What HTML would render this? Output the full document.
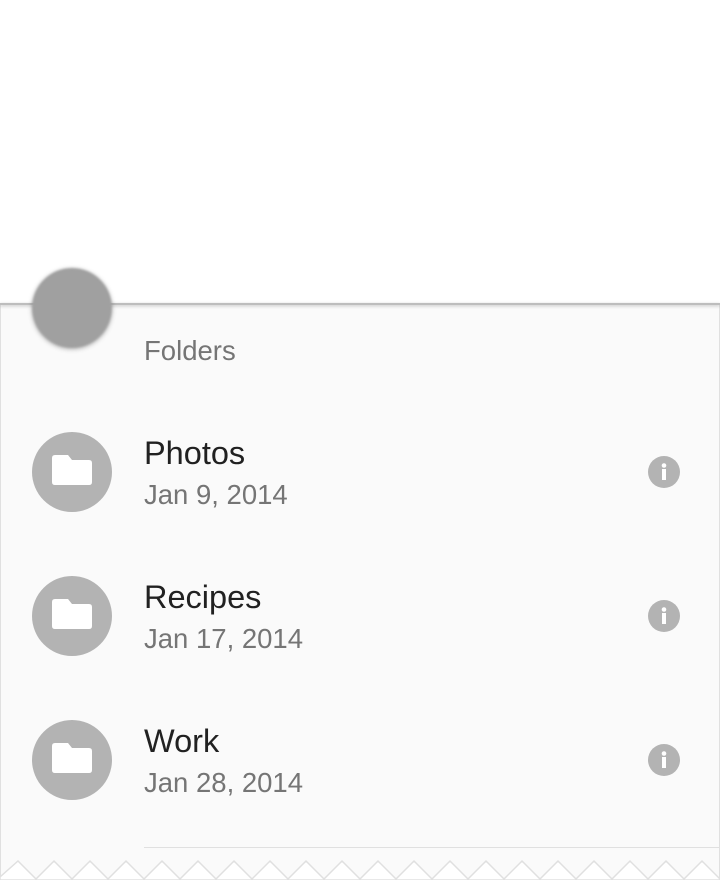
<!DOCTYPE html>
<html><head><style>
html,body{margin:0;padding:0;width:720px;height:880px;background:#fff;overflow:hidden;font-family:"Liberation Sans",sans-serif;position:relative}
.sheet{position:absolute;left:0;top:304px;width:720px;height:576px;background:#fafafa;border-left:1px solid #e0e0e0;border-right:1px solid #e0e0e0;box-sizing:border-box}
.topline{position:absolute;left:0;top:303px;width:720px;height:2px;background:#bdbdbd;box-shadow:0 1px 3px rgba(0,0,0,.25)}
.fab{position:absolute;left:32px;top:268px;width:80px;height:80px;border-radius:50%;background:#a0a0a0;filter:blur(1px);box-shadow:0 1px 4px rgba(0,0,0,.3)}
.hdr{position:absolute;left:144px;top:335px;font-size:27.5px;color:#757575}
.av{position:absolute;left:32px;width:80px;height:80px;border-radius:50%;background:#b3b3b3}
.av svg{position:absolute;left:20px;top:15px}
.t{position:absolute;left:144px;font-size:32.5px;color:#212121}
.d{position:absolute;left:144px;font-size:27.5px;color:#757575}
.info{position:absolute;left:648px;width:32px;height:32px}
.div{position:absolute;left:144px;top:847px;width:576px;height:1px;background:#e0e0e0}
</style></head><body>
<div class="sheet"></div>
<div class="topline"></div>
<div class="fab"></div>
<div class="hdr">Folders</div>

<div class="av" style="top:432px"><svg width="40" height="40" viewBox="0 0 40 40"><path d="M3 8 Q0 8 0 11 V35 Q0 38 3 38 H37 Q40 38 40 35 V16 Q40 13 37 13 H20 L16 8 Z" fill="#fff"/></svg></div>
<div class="t" style="top:435px">Photos</div>
<div class="d" style="top:479px">Jan 9, 2014</div>
<svg class="info" style="top:456px" viewBox="0 0 32 32"><circle cx="16" cy="16" r="16" fill="#b3b3b3"/><circle cx="16" cy="9.5" r="2.3" fill="#fff"/><rect x="14" y="13" width="4" height="11" fill="#fff"/></svg>

<div class="av" style="top:576px"><svg width="40" height="40" viewBox="0 0 40 40"><path d="M3 8 Q0 8 0 11 V35 Q0 38 3 38 H37 Q40 38 40 35 V16 Q40 13 37 13 H20 L16 8 Z" fill="#fff"/></svg></div>
<div class="t" style="top:579px">Recipes</div>
<div class="d" style="top:623px">Jan 17, 2014</div>
<svg class="info" style="top:600px" viewBox="0 0 32 32"><circle cx="16" cy="16" r="16" fill="#b3b3b3"/><circle cx="16" cy="9.5" r="2.3" fill="#fff"/><rect x="14" y="13" width="4" height="11" fill="#fff"/></svg>

<div class="av" style="top:720px"><svg width="40" height="40" viewBox="0 0 40 40"><path d="M3 8 Q0 8 0 11 V35 Q0 38 3 38 H37 Q40 38 40 35 V16 Q40 13 37 13 H20 L16 8 Z" fill="#fff"/></svg></div>
<div class="t" style="top:723px">Work</div>
<div class="d" style="top:767px">Jan 28, 2014</div>
<svg class="info" style="top:744px" viewBox="0 0 32 32"><circle cx="16" cy="16" r="16" fill="#b3b3b3"/><circle cx="16" cy="9.5" r="2.3" fill="#fff"/><rect x="14" y="13" width="4" height="11" fill="#fff"/></svg>

<div class="div"></div>
<svg style="position:absolute;left:0;top:858px" width="720" height="22" viewBox="0 858 720 22">
<path d="M0 880 L0 877 L18 861 L36 879 L54 861 L72 879 L90 861 L108 879 L126 861 L144 879 L162 861 L180 879 L198 861 L216 879 L234 861 L252 879 L270 861 L288 879 L306 861 L324 879 L342 861 L360 879 L378 861 L396 879 L414 861 L432 879 L450 861 L468 879 L486 861 L504 879 L522 861 L540 879 L558 861 L576 879 L594 861 L612 879 L630 861 L648 879 L666 861 L684 879 L702 861 L720 879 L720 880 Z" fill="#fff" stroke="#e0e0e0" stroke-width="1.5"/>
</svg>
</body></html>
